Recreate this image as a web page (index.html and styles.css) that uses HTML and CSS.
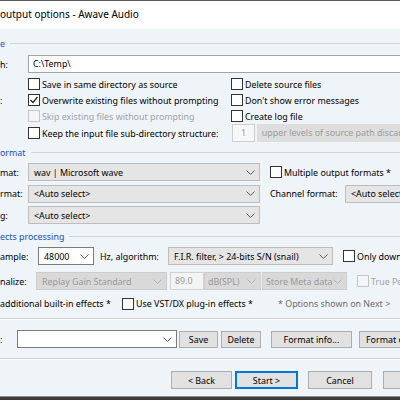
FILE: index.html
```html
<!DOCTYPE html>
<html lang="en">
<head>
    <meta charset="UTF-8">
    <title>Output options - Awave Audio</title>
    <link rel="stylesheet" href="styles.css">
</head>
<body>
    <div class="window">
        <div class="titlebar">output options - Awave Audio</div>

        <div class="client">
            <!-- destination -->
            <div class="group-head"><span>e</span></div>
            <div class="row path-row">
                <span class="label path-label">h:</span>
                <div class="edit path-edit">C:\Temp\</div>
            </div>

            <div class="checks">
                <span></span>
                <label class="check"><span class="box"></span>Save in same directory as source</label>
                <label class="check"><span class="box"></span>Delete source files</label>

                <span class="label">:</span>
                <label class="check"><span class="box"><svg width="10" height="10" viewBox="0 0 10 10"><path d="M1.5 5 4 7.5 8.5 2" fill="none" stroke="#222" stroke-width="1.2"/></svg></span>Overwrite existing files without prompting</label>
                <label class="check"><span class="box"></span>Don't show error messages</label>

                <span></span>
                <label class="check disabled"><span class="box"></span>Skip existing files without prompting</label>
                <label class="check"><span class="box"></span>Create log file</label>

                <span></span>
                <label class="check"><span class="box"></span>Keep the input file sub-directory structure:</label>
                <div class="levels">
                    <span class="spin">1</span>
                    <span class="levels-field">upper levels of source path discarded</span>
                </div>
            </div>

            <!-- format -->
            <div class="group-head format-head"><span>ormat</span></div>
            <div class="format-rows">
                <div class="row">
                    <span class="label format-label">mat:</span>
                    <div class="combo format-combo"><span>wav | Microsoft wave</span><svg width="9" height="5" viewBox="0 0 9 5"><path d="M0.5 0.5 4.5 4.5 8.5 0.5" fill="none" stroke="#5a5a5a"/></svg></div>
                    <label class="check multi"><span class="box"></span>Multiple output formats *</label>
                </div>
                <div class="row">
                    <span class="label format-label">rmat:</span>
                    <div class="combo format-combo"><span>&lt;Auto select&gt;</span><svg width="9" height="5" viewBox="0 0 9 5"><path d="M0.5 0.5 4.5 4.5 8.5 0.5" fill="none" stroke="#5a5a5a"/></svg></div>
                    <span class="label channel-label">Channel format:</span>
                    <div class="combo channel-combo"><span>&lt;Auto select&gt;</span></div>
                </div>
                <div class="row">
                    <span class="label format-label">g:</span>
                    <div class="combo format-combo"><span>&lt;Auto select&gt;</span><svg width="9" height="5" viewBox="0 0 9 5"><path d="M0.5 0.5 4.5 4.5 8.5 0.5" fill="none" stroke="#5a5a5a"/></svg></div>
                </div>
            </div>

            <!-- effects -->
            <div class="group-head effects-head"><span>ects processing</span></div>
            <div class="row resample-row">
                <span class="label resample-label">ample:</span>
                <div class="combo white rate-combo"><span>48000</span><svg width="9" height="5" viewBox="0 0 9 5"><path d="M0.5 0.5 4.5 4.5 8.5 0.5" fill="none" stroke="#5a5a5a"/></svg></div>
                <span class="label hz-label">Hz, algorithm:</span>
                <div class="combo algo-combo"><span>F.I.R. filter, &gt; 24-bits S/N (snail)</span><svg width="9" height="5" viewBox="0 0 9 5"><path d="M0.5 0.5 4.5 4.5 8.5 0.5" fill="none" stroke="#5a5a5a"/></svg></div>
                <label class="check only-down"><span class="box"></span>Only downsample</label>
            </div>
            <div class="row normalize-row">
                <span class="label normalize-label">nalize:</span>
                <div class="combo disabled norm-combo"><span>Replay Gain Standard</span><svg width="9" height="5" viewBox="0 0 9 5"><path d="M0.5 0.5 4.5 4.5 8.5 0.5" fill="none" stroke="#b4b4b4"/></svg></div>
                <span class="level-spin">89.0</span>
                <div class="combo disabled unit-combo"><span>dB(SPL)</span><svg width="9" height="5" viewBox="0 0 9 5"><path d="M0.5 0.5 4.5 4.5 8.5 0.5" fill="none" stroke="#b4b4b4"/></svg></div>
                <div class="combo disabled meta-combo"><span>Store Meta data</span><svg width="9" height="5" viewBox="0 0 9 5"><path d="M0.5 0.5 4.5 4.5 8.5 0.5" fill="none" stroke="#b4b4b4"/></svg></div>
                <label class="check disabled true-peak"><span class="box"></span>True Peak</label>
            </div>
            <div class="row effects-row">
                <span class="effects-label">additional built-in effects *</span>
                <label class="check vst-check"><span class="box"></span>Use VST/DX plug-in effects *</label>
                <span class="options-note">* Options shown on Next &gt;</span>
            </div>

            <div class="separator"></div>

            <!-- preset -->
            <div class="row preset-row">
                <span class="label preset-label">:</span>
                <div class="combo white preset-combo"><span></span><svg width="9" height="5" viewBox="0 0 9 5"><path d="M0.5 0.5 4.5 4.5 8.5 0.5" fill="none" stroke="#5a5a5a"/></svg></div>
                <button class="btn save-btn">Save</button>
                <button class="btn delete-btn">Delete</button>
                <button class="btn info-btn">Format info...</button>
                <button class="btn convert-btn">Format options</button>
            </div>

            <div class="separator bottom-separator"></div>

            <div class="row buttons-row">
                <button class="btn back-btn">&lt; Back</button>
                <button class="btn start-btn">Start &gt;</button>
                <button class="btn cancel-btn">Cancel</button>
                <button class="btn help-btn">Help</button>
            </div>
        </div>
    </div>
</body>
</html>
```

FILE: styles.css
```css
* {
    box-sizing: border-box;
}

body {
    margin: 0;
    background: #3b3b3b;
    font-family: "Noto Sans", "Liberation Sans", sans-serif;
    font-size: 8.9px;
    color: #000;
}

.window {
    width: 400px;
    height: 397px;
    overflow: hidden;
    background: #eff4f9;
    border-top: 1px solid #5c5c5c;
    border-bottom: 1px solid #8a8a8a;
}

.titlebar {
    height: 28px;
    background: #fff;
    font-size: 10px;
    line-height: 26px;
    white-space: nowrap;
}

.client {
    padding-top: 7px;
    white-space: nowrap;
}

/* group box captions */
.group-head {
    display: flex;
    align-items: center;
    height: 14px;
    color: #1a4ec2;
}

.group-head::after {
    content: "";
    flex: 1;
    margin-left: 5px;
    border-top: 1px solid #cdd4dc;
}

.format-head {
    margin-top: 3px;
}

.effects-head {
    margin-top: 5px;
}

.row {
    display: flex;
    align-items: center;
    height: 18px;
}

.label {
    flex-shrink: 0;
}

.edit {
    flex-shrink: 0;
    height: 18px;
    border: 1px solid #a3a3a3;
    background: #fff;
    padding-left: 4px;
    line-height: 16px;
}

.path-row {
    margin-top: 5px;
}

.path-label {
    width: 28px;
}

.path-edit {
    width: 400px;
}

/* checkboxes */
.checks {
    display: grid;
    grid-template-columns: 28px 203px 200px;
    grid-template-rows: 16px 16px 16px 18px;
    align-items: center;
    margin-top: 3px;
}

.check {
    display: flex;
    align-items: center;
    gap: 2px;
    flex-shrink: 0;
}

.box {
    width: 12px;
    height: 12px;
    border: 1px solid #333;
    background: #fff;
    display: flex;
    align-items: center;
    justify-content: center;
    flex-shrink: 0;
}

.check.disabled {
    color: #a3a3a3;
}

.check.disabled .box {
    border-color: #c6c6c6;
    background: #f3f5f8;
}

.levels {
    display: flex;
    align-items: center;
    margin-left: 1px;
}

.spin {
    width: 26px;
    height: 18px;
    border: 1px solid #cfcfcf;
    background: #f7f7f7;
    color: #9a9a9a;
    text-align: center;
    line-height: 16px;
}

.levels-field {
    margin-left: 2px;
    width: 200px;
    height: 18px;
    background: #dedede;
    color: #9c9c9c;
    padding-left: 5px;
    line-height: 18px;
}

/* combos */
.combo {
    display: flex;
    align-items: center;
    justify-content: space-between;
    flex-shrink: 0;
    height: 18px;
    border: 1px solid #bdbdbd;
    background: #e5e5e5;
    padding: 0 4px 0 5px;
}

.combo svg {
    flex-shrink: 0;
}

.combo.white {
    background: #fff;
    border-color: #7a7a7a;
}

.combo.disabled {
    background: #d9d9d9;
    border-color: #cdcdcd;
    color: #9a9a9a;
}

.format-rows {
    display: flex;
    flex-direction: column;
    gap: 3.5px;
    margin-top: 4px;
}

.format-label {
    width: 28px;
}

.format-combo {
    width: 232px;
}

.multi {
    margin-left: 10px;
}

.channel-label {
    margin-left: 10px;
    width: 75px;
}

.channel-combo {
    width: 120px;
}

.resample-row {
    margin-top: 4px;
}

.resample-label {
    width: 38px;
}

.rate-combo {
    width: 56px;
}

.hz-label {
    margin-left: 6px;
    width: 68px;
}

.algo-combo {
    width: 165px;
}

.only-down {
    margin-left: 10px;
}

.normalize-row {
    margin-top: 7px;
}

.normalize-label {
    width: 36px;
}

.norm-combo {
    width: 131px;
}

.level-spin {
    flex-shrink: 0;
    margin-left: 3px;
    width: 34px;
    height: 18px;
    border: 1px solid #d2d2d2;
    background: #f4f4f4;
    color: #9a9a9a;
    padding-left: 4px;
    line-height: 16px;
}

.unit-combo {
    width: 57px;
    padding-left: 3px;
}

.meta-combo {
    margin-left: 1px;
    width: 85px;
    padding-left: 3px;
}

.true-peak {
    margin-left: 10px;
}

.effects-row {
    margin-top: 6px;
    height: 15px;
}

.effects-label {
    width: 122px;
    flex-shrink: 0;
}

.vst-check {
    width: 156px;
}

.options-note {
    color: #6d6d6d;
}

.separator {
    margin-top: 7px;
    border-top: 1px solid #cdd3da;
    border-bottom: 1px solid #fff;
}

/* preset + buttons */
.preset-row {
    margin-top: 10px;
}

.preset-label {
    width: 17px;
}

.preset-combo {
    width: 160px;
}

.btn {
    flex-shrink: 0;
    height: 17px;
    margin: 0;
    padding: 0;
    border: 1px solid #adadad;
    background: #e1e1e1;
    font: inherit;
    color: #000;
}

.save-btn {
    margin-left: 2px;
    width: 39px;
}

.delete-btn {
    margin-left: 3px;
    width: 40px;
}

.info-btn {
    margin-left: 10px;
    width: 81px;
}

.convert-btn {
    margin-left: 7px;
    width: 64px;
    text-align: left;
    padding-left: 6px;
}

.bottom-separator {
    margin-top: 10px;
}

.buttons-row {
    margin-top: 11px;
    padding-left: 171px;
}

.buttons-row .btn {
    height: 18px;
}

.back-btn {
    width: 61px;
}

.start-btn {
    margin-left: 3px;
    width: 63px;
    border-color: #0078d7;
    box-shadow: inset 0 0 0 1px #0078d7;
}

.cancel-btn {
    margin-left: 10px;
    width: 64px;
}

.help-btn {
    margin-left: 11px;
    width: 64px;
}
```
